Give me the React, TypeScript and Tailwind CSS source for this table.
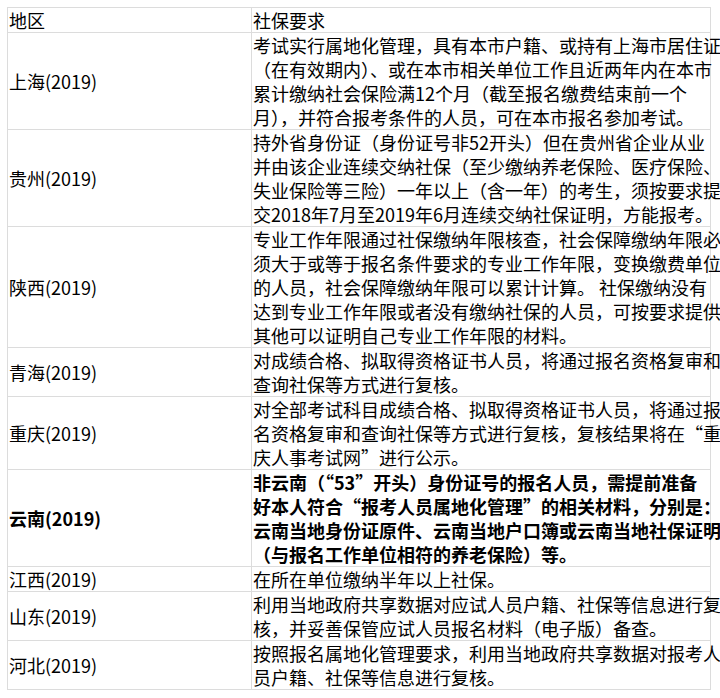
import React from "react";

type Row = { region: string; lines: string[]; bold?: boolean };

const rows: Row[] = [
  {
    region: "上海(2019)",
    lines: [
      "考试实行属地化管理，具有本市户籍、或持有上海市居住证",
      "（在有效期内）、或在本市相关单位工作且近两年内在本市",
      "累计缴纳社会保险满12个月（截至报名缴费结束前一个",
      "月），并符合报考条件的人员，可在本市报名参加考试。",
    ],
  },
  {
    region: "贵州(2019)",
    lines: [
      "持外省身份证（身份证号非52开头）但在贵州省企业从业",
      "并由该企业连续交纳社保（至少缴纳养老保险、医疗保险、",
      "失业保险等三险）一年以上（含一年）的考生，须按要求提",
      "交2018年7月至2019年6月连续交纳社保证明，方能报考。",
    ],
  },
  {
    region: "陕西(2019)",
    lines: [
      "专业工作年限通过社保缴纳年限核查，社会保障缴纳年限必",
      "须大于或等于报名条件要求的专业工作年限，变换缴费单位",
      "的人员，社会保障缴纳年限可以累计计算。 社保缴纳没有",
      "达到专业工作年限或者没有缴纳社保的人员，可按要求提供",
      "其他可以证明自己专业工作年限的材料。",
    ],
  },
  {
    region: "青海(2019)",
    lines: [
      "对成绩合格、拟取得资格证书人员，将通过报名资格复审和",
      "查询社保等方式进行复核。",
    ],
  },
  {
    region: "重庆(2019)",
    lines: [
      "对全部考试科目成绩合格、拟取得资格证书人员，将通过报",
      "名资格复审和查询社保等方式进行复核，复核结果将在“重",
      "庆人事考试网”进行公示。",
    ],
  },
  {
    region: "云南(2019)",
    bold: true,
    lines: [
      "非云南（“53”开头）身份证号的报名人员，需提前准备",
      "好本人符合“报考人员属地化管理”的相关材料，分别是：",
      "云南当地身份证原件、云南当地户口簿或云南当地社保证明",
      "（与报名工作单位相符的养老保险）等。",
    ],
  },
  {
    region: "江西(2019)",
    lines: ["在所在单位缴纳半年以上社保。"],
  },
  {
    region: "山东(2019)",
    lines: [
      "利用当地政府共享数据对应试人员户籍、社保等信息进行复",
      "核，并妥善保管应试人员报名材料（电子版）备查。",
    ],
  },
  {
    region: "河北(2019)",
    lines: [
      "按照报名属地化管理要求，利用当地政府共享数据对报考人",
      "员户籍、社保等信息进行复核。",
    ],
  },
];

export default function App() {
  return (
    <div
      className="w-[720px] h-[698px] bg-white pt-[7px] pl-[7px] text-black text-[18px] leading-[24px]"
      style={{ fontFamily: '"Noto Sans CJK SC", "Noto Sans", sans-serif' }}
    >
      <div className="grid grid-cols-[244px_459px] w-[704px] border-t border-l border-[#dcdcdc]">
        <div className="border-r border-b border-[#dcdcdc] px-[1px] whitespace-nowrap">地区</div>
        <div className="border-r border-b border-[#dcdcdc] px-[1px] whitespace-nowrap">社保要求</div>
        {rows.map((r) => (
          <React.Fragment key={r.region}>
            <div
              className={
                "border-r border-b border-[#dcdcdc] px-[1px] flex items-center whitespace-nowrap " +
                (r.bold ? "font-bold" : "font-normal")
              }
            >
              {r.region}
            </div>
            <div
              className={
                "border-r border-b border-[#dcdcdc] px-[1px] whitespace-nowrap tracking-[0px] " +
                (r.bold ? "font-bold" : "font-normal")
              }
            >
              {r.lines.map((l, i) => (
                <div key={i}>{l}</div>
              ))}
            </div>
          </React.Fragment>
        ))}
      </div>
    </div>
  );
}
